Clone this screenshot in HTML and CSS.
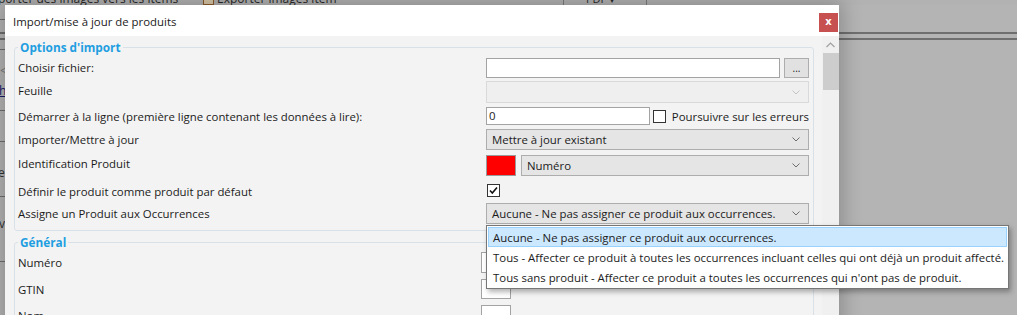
FILE: index.html
```html
<!DOCTYPE html>
<html lang="fr">
<head>
<meta charset="utf-8">
<title>Import/mise à jour de produits</title>
<link rel="stylesheet" href="styles.css">
</head>
<body>
<div class="app">
  <div class="toolbar">
    <span class="tb-text tb-first">porter des images vers les items</span>
    <span class="tb-text tb-export"><span class="tb-icon"></span>Exporter images item</span>
    <span class="tb-sep tb-sep1"></span>
    <span class="tb-text tb-pdf">PDF ▾</span>
    <span class="tb-sep"></span>
  </div>
  <div class="app-body">
    <div class="rule r-a"></div>
    <div class="rule full r-b"></div>
    <div class="rule full r-c"></div>
    <div class="rule r-d"></div>
    <div class="strip-glyph g1">&lt;</div>
    <div class="strip-glyph g2">h</div>
    <div class="rule r-e"></div>
    <div class="rule r-f"></div>
    <div class="strip-glyph g3">e</div>
    <div class="rule r-g"></div>
    <div class="strip-glyph g4">vi</div>
    <div class="rule r-h"></div>
  </div>
</div>

<div class="dialog">
  <div class="titlebar">
    <span class="title">Import/mise à jour de produits</span>
    <span class="close">x</span>
  </div>
  <div class="dlg-body">
    <div class="content">
      <fieldset class="group">
        <legend>Options d'import</legend>
        <div class="row r1">
          <span class="label">Choisir fichier:</span>
          <div class="ctl file-ctl">
            <span class="textbox file-box"></span>
            <span class="btn-dots">...</span>
          </div>
        </div>
        <div class="row r2">
          <span class="label up2">Feuille</span>
          <div class="combo disabled"><span class="combo-text"></span><svg class="chev" width="8" height="5" viewBox="0 0 8 5"><polyline points="0.5,0.5 4,4 7.5,0.5" fill="none" stroke="currentColor" stroke-width="1"/></svg></div>
        </div>
        <div class="row r3">
          <span class="label">Démarrer à la ligne (première ligne contenant les données à lire):</span>
          <div class="ctl start-ctl">
            <span class="textbox start-box">0</span>
            <span class="check"></span>
            <span class="check-label">Poursuivre sur les erreurs</span>
          </div>
        </div>
        <div class="row r4">
          <span class="label">Importer/Mettre à jour</span>
          <div class="combo"><span class="combo-text">Mettre à jour existant</span><svg class="chev" width="8" height="5" viewBox="0 0 8 5"><polyline points="0.5,0.5 4,4 7.5,0.5" fill="none" stroke="currentColor" stroke-width="1"/></svg></div>
        </div>
        <div class="row r5">
          <span class="label up2">Identification Produit</span>
          <div class="ctl ident-ctl">
            <span class="swatch"></span>
            <div class="combo grow"><span class="combo-text">Numéro</span><svg class="chev" width="8" height="5" viewBox="0 0 8 5"><polyline points="0.5,0.5 4,4 7.5,0.5" fill="none" stroke="currentColor" stroke-width="1"/></svg></div>
          </div>
        </div>
        <div class="row r6">
          <span class="label down1">Définir le produit comme produit par défaut</span>
          <div class="ctl"><span class="check checked"><svg width="11" height="11" viewBox="0 0 11 11"><polyline points="2,5.5 4.3,8 9,2.5" fill="none" stroke="#111" stroke-width="1.6"/></svg></span></div>
        </div>
        <div class="row r7">
          <span class="label">Assigne un Produit aux Occurrences</span>
          <div class="combo"><span class="combo-text">Aucune - Ne pas assigner ce produit aux occurrences.</span><svg class="chev" width="8" height="5" viewBox="0 0 8 5"><polyline points="0.5,0.5 4,4 7.5,0.5" fill="none" stroke="currentColor" stroke-width="1"/></svg></div>
        </div>
      </fieldset>

      <fieldset class="group general">
        <legend>Général</legend>
        <div class="grow-row g-r1">
          <span class="label">Numéro</span>
          <span class="textbox small-box"></span>
        </div>
        <div class="grow-row g-r2">
          <span class="label">GTIN</span>
          <span class="textbox small-box"></span>
        </div>
        <div class="grow-row g-r3">
          <span class="label">Nom</span>
          <span class="textbox small-box"></span>
        </div>
      </fieldset>
    </div>
    <div class="scrollbar">
      <div class="sb-up"><svg width="9" height="6" viewBox="0 0 9 6"><polyline points="0.5,5 4.5,1 8.5,5" fill="none" stroke="#a0a0a0" stroke-width="1.2"/></svg></div>
      <div class="sb-thumb"></div>
    </div>
  </div>
</div>

<ul class="popup">
  <li class="item selected">Aucune - Ne pas assigner ce produit aux occurrences.</li>
  <li class="item">Tous - Affecter ce produit à toutes les occurrences incluant celles qui ont déjà un produit affecté.</li>
  <li class="item">Tous sans produit - Affecter ce produit a toutes les occurrences qui n'ont pas de produit.</li>
</ul>
</body>
</html>
```

FILE: styles.css
```css
* { box-sizing: border-box; }

html, body {
  margin: 0;
  padding: 0;
  width: 1017px;
  height: 315px;
  overflow: hidden;
}

body {
  background: #b5b5b5;
  font-family: "Open Sans", "Noto Sans", "DejaVu Sans", sans-serif;
  font-size: 11.4px;
  color: #1b1b1b;
  position: relative;
}

/* ---------- background application (dimmed) ---------- */
.app {
  width: 1017px;
  height: 315px;
  background: #b4b4b4;
}

.toolbar {
  height: 5px;
  display: flex;
  align-items: flex-start;
  overflow: hidden;
  background: #b2b2b2;
}

.tb-text {
  display: flex;
  align-items: center;
  margin-top: -8px;
  line-height: 14px;
  font-size: 12px;
  color: #2a2a2a;
  white-space: nowrap;
}

.tb-first { margin-left: -2px; width: 205px; }

.tb-export { width: 360px; }

.tb-icon {
  width: 11px;
  height: 11px;
  margin-right: 3px;
  border: 1px solid #8a5a2a;
  background: #d8c7a8;
}

.tb-sep {
  width: 1px;
  height: 5px;
  background: #7c7c7c;
}

.tb-sep1 { margin-right: 22px; }

.tb-pdf { width: 60px; font-size: 11px; }

.app-body {
  display: flex;
  flex-direction: column;
}

.rule {
  height: 1px;
  width: 5px;
  background: #6f6f6f;
}

.rule.full { width: 1017px; height: 2px; }

.r-a { margin-top: 14px; }
.r-b { margin-top: 12px; }
.r-c { margin-top: 4px; }
.r-d { margin-top: 9px; }

.strip-glyph {
  width: 5px;
  overflow: hidden;
  font-size: 12px;
  line-height: 14px;
  color: #333;
  white-space: nowrap;
}

.g1 { margin-top: 14px; color: #777; }
.g2 { margin-top: 6px; text-decoration: underline; color: #1a1a6a; text-indent: -1px; }
.r-e { margin-top: 12px; }
.r-f { margin-top: 30px; }
.g3 { margin-top: 24px; text-indent: -2px; }
.r-g { margin-top: 16px; }
.g4 { margin-top: 20px; text-indent: -1px; }
.r-h { margin-top: 30px; }

/* ---------- dialog ---------- */
.dialog {
  position: absolute;
  left: 5px;
  top: 5px;
  width: 834px;
  height: 330px;
  background: #f3f3f3;
  box-shadow: 0 0 18px 4px rgba(0, 0, 0, 0.22);
  display: flex;
  flex-direction: column;
}

.titlebar {
  height: 31px;
  background: #ffffff;
  display: flex;
  align-items: flex-start;
  justify-content: space-between;
  padding-left: 8px;
  flex: none;
}

.title {
  font-size: 11.4px;
  line-height: 16px;
  margin-top: 9px;
  color: #1a1a1a;
}

.close {
  width: 19px;
  height: 19px;
  margin-top: 8px;
  margin-right: 1px;
  background: #c75050;
  color: #ffffff;
  font-family: "DejaVu Sans", sans-serif;
  font-weight: bold;
  font-size: 10px;
  line-height: 17px;
  text-align: center;
}

.dlg-body {
  flex: 1;
  display: flex;
  min-height: 0;
}

.content {
  flex: 1;
  padding: 3px 8px 0 9px;
  overflow: hidden;
}

.group {
  margin: 0;
  padding: 0 0 6px 3px;
  border: 1px solid #d9e1e8;
  border-radius: 3px;
  min-width: 0;
}

.group legend {
  margin-left: 0;
  padding: 0 2px;
  font-weight: bold;
  font-size: 11.8px;
  line-height: 16px;
  color: #1f9ee1;
}

.row {
  display: grid;
  grid-template-columns: 468px 323px;
  align-items: center;
}

.label {
  white-space: nowrap;
  line-height: 15px;
}

.up2 { padding-bottom: 4px; }
.down1 { padding-top: 2px; }

.r1 { margin-top: 2px; height: 21px; }
.r2 { margin-top: 3px; height: 22px; }
.r3 { margin-top: 4px; height: 18px; }
.r4 { margin-top: 4px; height: 21px; }
.r5 { margin-top: 5px; height: 21px; }
.r6 { margin-top: 6px; height: 15px; }
.r7 { margin-top: 6px; height: 21px; }

.ctl {
  display: flex;
  align-items: center;
  height: 100%;
}

.textbox {
  display: flex;
  align-items: center;
  background: #ffffff;
  border: 1px solid #a3a3a3;
  padding-left: 2px;
  height: 100%;
  line-height: 14px;
}

.file-box { width: 294px; height: 20px; }

.btn-dots {
  width: 25px;
  height: 20px;
  margin-left: 4px;
  background: #e1e1e1;
  border: 1px solid #adadad;
  text-align: center;
  font-size: 10px;
  line-height: 18px;
  color: #222;
}

.start-box { width: 166px; }

.check {
  width: 13px;
  height: 13px;
  margin-left: 3px;
  background: #ffffff;
  border: 1px solid #333333;
  display: flex;
  align-items: center;
  justify-content: center;
}

.check.checked { margin-left: 1px; }

.check-label {
  margin-left: 6px;
  white-space: nowrap;
}

.combo {
  display: flex;
  align-items: center;
  justify-content: space-between;
  height: 100%;
  background: #e5e5e5;
  border: 1px solid #adadad;
  padding: 0 8px 0 5px;
  color: #1b1b1b;
  white-space: nowrap;
}

.combo .chev { color: #6d6d6d; flex: none; }

.combo.disabled {
  background: #efefef;
  border-color: #d9d9d9;
}

.combo.disabled .chev { color: #c4c4c4; }

.swatch {
  width: 30px;
  height: 21px;
  flex: none;
  background: #ff0000;
  border: 1px solid #9a9a9a;
  margin-right: 5px;
}

.combo.grow { flex: 1; }

.general { margin-top: 3px; padding-bottom: 0; }

.grow-row {
  display: grid;
  grid-template-columns: 463px 30px;
  align-items: center;
}

.small-box { width: 30px; }

.g-r1 { margin-top: 2px; height: 21px; }
.g-r2 { margin-top: 6px; height: 20px; }
.g-r3 { margin-top: 6px; height: 20px; }

/* ---------- scrollbar ---------- */
.scrollbar {
  width: 17px;
  flex: none;
  background: #f0f0f0;
  display: flex;
  flex-direction: column;
  align-items: flex-end;
}

.sb-up {
  width: 17px;
  height: 17px;
  display: flex;
  align-items: center;
  justify-content: center;
}

.sb-thumb {
  width: 16px;
  height: 37px;
  background: #cdcdcd;
}

/* ---------- dropdown popup ---------- */
.popup {
  position: absolute;
  left: 486px;
  top: 225px;
  width: 523px;
  margin: 0;
  padding: 1px;
  list-style: none;
  background: #ffffff;
  border: 1px solid #767676;
  box-shadow: 2px 3px 5px rgba(0, 0, 0, 0.3);
}

.item {
  height: 20px;
  padding-left: 4px;
  border: 1px solid transparent;
  display: flex;
  align-items: center;
  white-space: nowrap;
  color: #1b1b1b;
}

.item.selected {
  background: #cce8ff;
  border-color: #99d1ff;
}
```
